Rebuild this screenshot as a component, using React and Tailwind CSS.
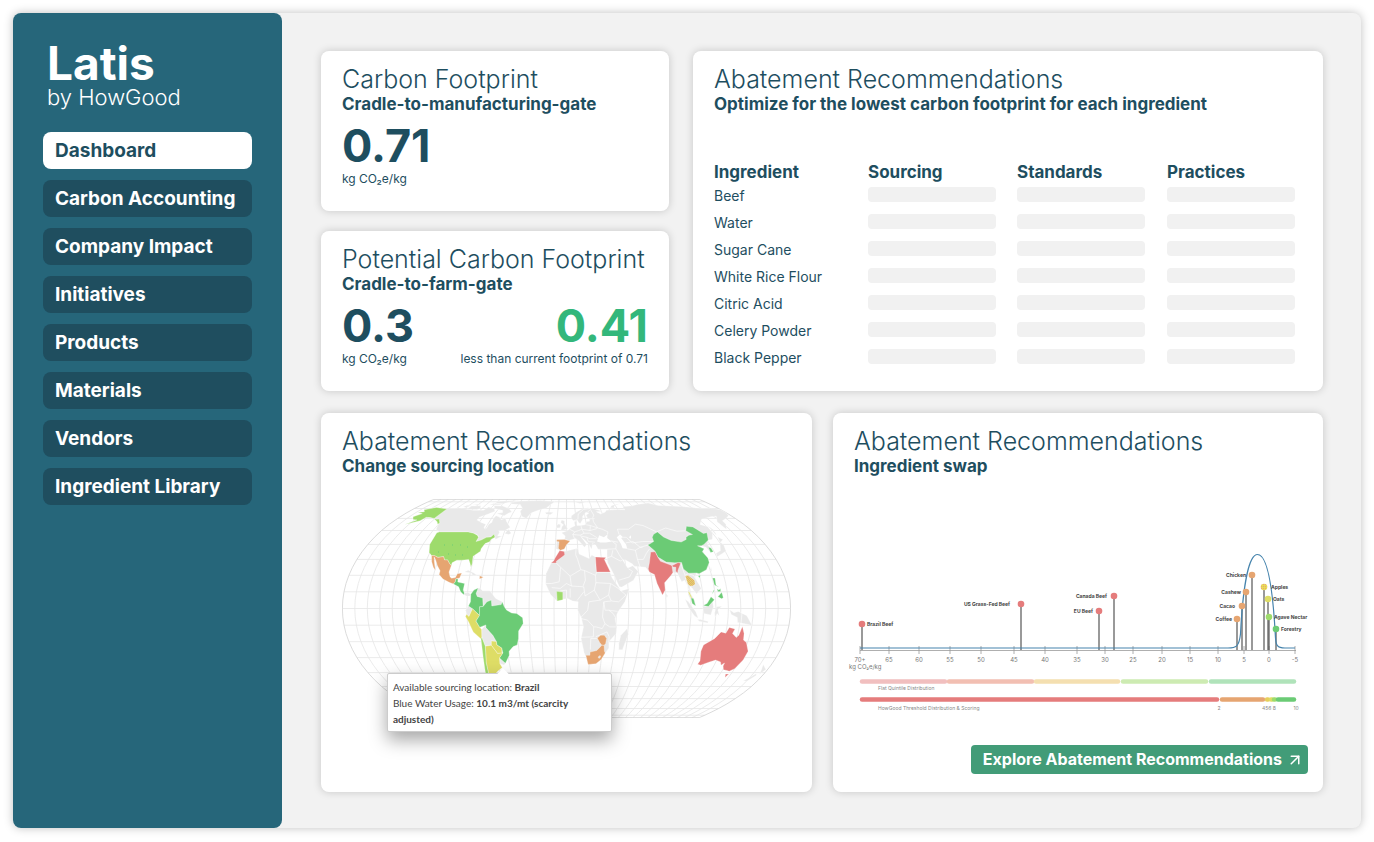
import { ArrowUpRight } from "lucide-react";

const NAV = [
  "Dashboard",
  "Carbon Accounting",
  "Company Impact",
  "Initiatives",
  "Products",
  "Materials",
  "Vendors",
  "Ingredient Library",
];

const INGREDIENTS = [
  "Beef",
  "Water",
  "Sugar Cane",
  "White Rice Flour",
  "Citric Acid",
  "Celery Powder",
  "Black Pepper",
];

const RED = "#e57c7c";
const ORANGE = "#e6a571";
const YELLOW = "#dedd66";
const LIME = "#9edb6c";
const GREEN = "#6bcb75";
const LAND = "#e9e9e9";

// Rough outlines, "lon,lat lon,lat ..."
const LANDMASSES = [
  // Canada and its islands
  "-141,60 -141,69.6 -128,70.5 -115,69 -108,68 -96,68 -94,72 -85,69.5 -82,67 -87,64 -94,61 -94,58.5 -88,56.5 -82,55 -82,52.5 -80,51 -79,52 -79,55 -77,56.5 -78,60 -77,62.5 -72,61 -69,58.8 -65,60 -62,57 -56,52.5 -60,50 -66,50 -64.5,48.5 -65,46 -61,46 -66,43.5 -67,45 -69,47.3 -71,45.3 -75,45 -79,43 -83,42 -82.5,45.5 -85,47 -89,48 -95,49 -123,49 -128,51 -130,54.5 -130,56 -135,59 -137.5,59",
  "-62,66 -68,70 -78,73 -89,73.5 -85,70 -74,68 -72,65.5 -78,64.5 -68,62.5 -65,65",
  "-117,70 -116,73 -105,73.5 -102,70 -105,69 -115,69",
  "-125,72 -123,74.3 -117,74 -121,71.5",
  "-90,77 -90,81 -70,83 -62,82.3 -75,79 -80,76.5",
  "-96,75 -92,76.7 -80,75.5 -82,74.7",
  "-117,75 -112,76 -106,75",
  "-59,47.7 -57,51 -53,48 -55,47",
  // Greenland, Iceland, Svalbard
  "-73,78.3 -60,82 -35,83.5 -15,81 -20,75 -24,70.5 -33,68 -40,65 -43,60 -49,62 -53,67 -52,70 -58,75.5 -68,76",
  "-24,65.5 -20,66 -14.5,65.5 -18,63.4 -22.5,64",
  "11,79 20,80.3 26,79.5 17,76.7",
  // Caribbean and Panama
  "-85,22 -82,23.1 -77,21.5 -74.2,20.2 -77.5,19.9 -79,21.5",
  "-83,8.2 -82.6,9.3 -79.5,9.5 -77.3,8.5 -78,7.4 -80.5,7.4",
  // Venezuela and the Guianas, Ecuador, Bolivia, Uruguay
  "-71.7,12.3 -70,12 -68,10.6 -62,10.6 -57,6 -51.7,4 -52.5,2.3 -60,1.5 -60.5,5 -64,4 -67,1.2 -67.5,6.2 -72,7.2 -73,9",
  "-78.8,1.5 -75.5,-0.2 -78.5,-4.8 -80.3,-3.4 -81,-1",
  "-69,-12.5 -65.3,-9.8 -65.3,-11.5 -60.2,-16.3 -58,-19.8 -62,-19.5 -62.6,-22.2 -67.8,-22.8 -69.5,-17.3",
  "-57.6,-30.2 -53.4,-33.7 -54.9,-34.9 -58.3,-34",
  // Africa
  "-17,14.7 -17,21 -13,27.7 -9.8,29.8 -6,35.8 -2,35.1 10,37.3 11,33.5 19.5,30.5 22,32.8 25,31.6 34,31.2 32.5,30 35.5,24 37.5,18.5 43,12 44,10.5 51,12 47,4 41.5,-1.7 39,-6 40.7,-11 40.5,-15 35,-20 35.5,-24 32.8,-27 30,-31.3 25.7,-34 19,-34.5 18,-31.5 15,-27 12,-18 13.8,-11 12,-5.5 9,-1 9.5,4 5,4.4 1,6 -4,5.3 -7.7,4.4 -13,8.5",
  "49.3,-12 50.5,-15.5 47,-25 44,-25 43.5,-21 44.5,-16",
  // Europe and Asia
  "-9.3,37 -9,43.3 -1.8,43.4 -1.2,46 -4.7,48.4 1.5,50 4,52 8.5,53.8 8,57 10.5,57.7 10.5,54 14,54 19,54.5 21,57.3 24,57.5 24,59.3 30,60 22.5,60 21.5,63 25.3,65 22,65.8 17.5,62 17,58.8 14,55.5 12.8,56 11,59 7.5,58 5,60 5.5,62.5 12,66.5 17,69 25,71 31,70.2 41,67 34,66.5 38,64 44,66 46,68 54,68.5 60,69 68,68.5 68,72.5 74,72.8 81,73.5 88,75.5 104,77.5 113,74 127,73 140,72.5 160,70 170,69.9 179.9,69 179.9,65 177,62.5 170,60 163,58 162,55 157,51 156,57 163,62 156,61.5 143,59.3 135.5,54.8 141,53 140,48 135,43.3 131,43 127.5,40 129.3,36.5 126.5,34.5 125,38 121.5,39 118,39 122.5,37 119.5,35 122,31 121.5,28 117,23.5 110,21 108,21.5 106,19 109.3,12 105,8.7 102,12.3 100,13.5 99.5,10 103,5 104,1.4 101,3 98.3,8 98.5,13.5 97,17 94.3,16 92,21.5 88,21.7 80,15.5 80,11 77.5,8 74,15 72.8,20.5 69,22 66.5,25 57,25.7 56,27 50,30 48,30 50,26.5 51.5,24.5 56,26 59.8,22.4 55,17 45,12.8 43,13 39,21 35,28 35,31 36,36.7 28,36.7 26.5,39.5 23.5,40.5 22.5,36.7 19.5,41 13.5,45.5 18.3,40 16,38 12,42 8.5,44.2 3.3,43 0,39.7 -2,36.8 -5.5,36",
  "-5.5,50 1.4,51.3 0,53 -2,55.8 -2,57.6 -5,58.6 -6,56.5 -3,54.5 -4.5,53",
  "-10,52 -6.3,52.2 -6,54.5 -8,55.2 -10,54",
  "52,71 56,74 68,76.9 58,73 57,70.7",
  "130,31.5 131,34 136,35.7 140,41 145,43.5 142,45.3 140.5,42 142,39.5 140.8,35.5 135.5,33.6",
  "142,46.5 142,54 143.5,51 143,48",
  "121,22 120.2,23.5 121.7,25.2",
  "80,9.5 81.8,7.5 80.5,6",
  // Indonesia, New Guinea, New Zealand
  "95.5,5.5 98,4 104,-2 106,-5.8 103,-4.5 98.5,0",
  "105.5,-6.5 108,-6.5 114.3,-7.8 114,-8.6 107,-7.6",
  "109.3,1.5 114,1.2 117.5,4 118,1 116,-3.8 110.5,-3",
  "119.5,-5.3 119,-2.5 120.5,1 124.8,1.3 121.5,-0.8 123,-4.5 121,-3",
  "131,-0.7 134.5,-2.5 138,-1.7 145,-4.3 150.5,-10.5 147,-9.5 143,-9 138,-8.3 137.5,-5.3 132.5,-3.5",
  "172.8,-34.6 178.3,-37.8 176,-41.2 174.8,-38.5",
  "172.7,-40.6 174,-42 170.5,-46 166.8,-46",
];

const SEAS = [
  "28,42 31,46.5 35,45 39,47 38,44.5 41.5,42 36,41.3 31,41.3",
  "47,45 51,47 53,45 51,44.5 54,40 54,37 50,37.3 49.5,40.3",
  "58.5,45 61,46.5 60,44",
];

const BORDERS = [
  // Africa
  "-8.7,27.7 -5,25 -6,16 -12,15 -17,15",
  "-5,25 3,19.5 12,23.5 9.5,30 8,33 8.5,37",
  "12,23.5 15,23 24,20 25,22 25,31",
  "24,20 24,15.5 22.5,11 15,7.5 14,13 4,13.5 3,19.5",
  "15,23 15.5,17 13.5,13.5",
  "4,13.5 0,15 -5,12 -12,12.5",
  "3,6.5 3,12",
  "0,6 0,11 -5,10.5",
  "8.5,4.8 14,10",
  "25,22 37,22",
  "24,15.5 36,15 34,8 27,5 22.5,11",
  "36,15 42,12 48,8 42,4 36,4.5 34,8",
  "36,4.5 30,4 31,-1 34,-1 41,-1.7",
  "34,-1 37.5,-3 39,-5",
  "27,5 18,4 17,-1 12,-5",
  "30,4 29,-5 31,-9 35,-11 40,-11",
  "12,-6 17,-7 22,-11 24,-11 29,-12 31,-9",
  "22,-11 22,-17 12,-17.3",
  "25,-18 20,-18 20,-25",
  "24,-17 30,-15 33,-14 35,-17 35,-20",
  // Europe
  "-1.8,43.4 3,42.5",
  "7.5,44 6,47 8,49 3,51",
  "6,47 13,46.5 17,48 15,51 14.5,54",
  "8,49 12,50 15,51 23,50 24,54 20,54.5",
  "17,48 22,48 28,45 29,44",
  "13,46 19,45 22,44 28,44",
  "19,45 20,42 26,41.5",
  "24,54 31,52 28,57 28,59.5",
  "31,52 35,51 40,49 39,47",
  "23,50 30,51.5",
  "12,59 13,64 20,69 28,70",
  "24,66 28,69 30,63 28,60.5",
  // Middle East and Asia
  "36,36.7 44,37 45,40 42,42",
  "41,42.5 47,41.5",
  "44,37 46,33 48,30",
  "35,31 39,32 41,36",
  "39,32 46,29 48,29.5",
  "43,17 52,19 55,22.5 52,24",
  "54,37 61,36 61,30 62,25",
  "61,30 66,30 70,34 74,37",
  "54,41 61,42 66,38 68,38",
  "50,47 50,51 61,51 70,55 77,54 87,49",
  "53,45 56,45 60,41 70,42 80,42",
  "61,36 66,38 73.5,39.5",
  "87,49 98,52 107,49.5 116,49.8",
  "97,28 98,20 101,21 105,20 108,15",
  "98,20 99,11",
  "141,-2.5 141,-9",
];

const SOURCING = [
  // United States and Alaska
  [LIME, "-124.7,48.4 -123,49 -95,49 -89,48 -84.5,46.5 -82.5,45 -83,42 -79,43 -75,45 -71,45.3 -69,47.3 -67,45 -70,43.5 -70.5,41.8 -74,40.5 -76,37 -75.8,35.3 -81,32 -80,27 -80.5,25.2 -82,27.5 -84,30 -89.5,29.5 -94,29.5 -97.3,27.8 -97.3,26 -99.5,27.5 -102,29.7 -104.5,29.6 -106.5,31.8 -111,31.3 -114.8,32.5 -117.2,32.5 -120.6,34.5 -124,40"],
  [LIME, "-141,60 -141,69.6 -156,71.3 -166,68.5 -162,66.5 -168,65.6 -161,64.5 -166,61.5 -162,59 -157.5,58.7 -164,54.7 -153,58 -151,61 -146,60.7"],
  [LIME, "-141,60 -137.5,59.3 -135,59.5 -130,56 -131,55 -134,57 -138,58.7"],
  // Mexico, Central America, Dominican Republic
  [ORANGE, "-117.2,32.5 -114.8,32.5 -111,31.3 -106.5,31.8 -104.5,29.6 -102,29.7 -99.5,27.5 -97.3,26 -97.8,22 -96,19 -94.5,18.2 -91.5,18.6 -90.5,21 -87,21.5 -88,18.3 -91,17.8 -91,16 -92.2,14.6 -96,15.7 -101.5,17.7 -105.5,20.5 -105.5,22.8 -109,26 -112.5,30 -114.7,31.7 -113,29 -110,24 -109.5,23 -112,25 -115,28.5"],
  [GREEN, "-92.2,14.6 -91,16 -91,17.8 -89.2,17.8 -88.9,15.9 -83.2,15 -83.7,11 -82.6,9.3 -83,8.2 -85.7,10 -87.7,13"],
  [ORANGE, "-71.7,19.7 -68.5,18.8 -71.5,17.8"],
  // South America
  [GREEN, "-77.3,8.5 -75,11 -71.7,12.3 -73,9 -72,7.2 -67.5,6.2 -67,1.2 -69.8,1 -70,-4.2 -72.5,-2.4 -75.5,-0.2 -78.8,1.5 -77.2,4"],
  [YELLOW, "-80.3,-3.4 -78.5,-4.8 -75.5,-0.2 -72.5,-2.4 -70,-4.2 -73,-7.5 -70.5,-11 -69,-12.5 -69.5,-17.3 -70.4,-18.3 -76,-14 -79,-8 -81.3,-4.7"],
  [GREEN, "-70,-4.2 -69.8,1 -67,1.2 -64,4 -60.5,5 -60,1.5 -52.5,2.3 -51.7,4 -50,1 -48,-1 -44,-2.7 -40,-3 -35.3,-5.5 -35,-9 -39,-13.5 -39.5,-18 -41,-22 -44.5,-23 -48.5,-26 -48.8,-28.5 -50.3,-30.3 -53.4,-33.7 -57.6,-30.2 -54,-27 -54.3,-24 -58,-22 -58,-19.8 -60.2,-16.3 -65.3,-11.5 -65.3,-9.8 -69.5,-11 -70.5,-11 -73,-7.5"],
  [YELLOW, "-62.6,-22.2 -62,-19.5 -58,-19.8 -58,-22 -54.3,-24 -54.7,-27.3 -58.6,-27.3"],
  [YELLOW, "-67.8,-22.8 -62.6,-22.2 -58.6,-27.3 -54,-27 -57.6,-30.2 -58.3,-34 -57,-36.5 -62,-39 -65,-41 -67.5,-46 -69,-50 -68.4,-52.3 -72,-51 -71.5,-44 -70,-33 -68.5,-27"],
  [LIME, "-70.4,-18.3 -69.5,-17.3 -67.8,-22.8 -68.5,-27 -70,-33 -71.5,-44 -72,-51 -68.4,-52.3 -68,-55 -75,-50 -73.5,-40 -71.5,-30"],
  // Africa and Spain
  [RED, "-13,27.7 -8.7,27.7 -8.7,28.8 -3,32 -1.5,33 -2,35.1 -6,35.8 -9.8,31 -11,29"],
  [RED, "25,31.6 34,31.2 32.5,30 35.5,24 36.5,22 25,22"],
  [LIME, "-8,10.3 -3,9.8 -3,5.2 -7.5,4.4"],
  [ORANGE, "25.3,-17.8 28,-16 31,-16 33,-18 32.5,-21 31.3,-22.3 29.5,-22.2 27.5,-20.5"],
  [ORANGE, "16.5,-28.5 20,-28.5 20,-26.5 25.5,-25.5 29.5,-22.2 31.3,-22.3 32,-26 32.8,-27 30,-31.3 25.7,-34 19,-34.5"],
  [LAND, "27,-29.7 28.7,-28.6 29.3,-29.6 28,-30.6"],
  [ORANGE, "-9.2,43.2 -1.8,43.4 3.3,42.3 0,39.7 -2,36.8 -5.5,36 -7.3,37.3 -6.8,41.8 -9,42"],
  // Asia
  [GREEN, "73.5,39.5 80,42 80.3,45 83,47.2 87.8,49 91,45.2 96.5,42.8 105,41.6 111,43.5 112,45 116,46.5 119.8,47 116,49.8 120,53.3 126,52.8 131,47.8 135,48.4 131,43 124.5,40 121.5,39 118,39 122.5,37 119.5,35 122,31 121.5,28 117,23.5 110,21 108,21.5 101.5,21.3 98,24 98,28 92,27.8 85,28.3 79,31.5 78,35.5"],
  [GREEN, "108.7,19.5 110.8,20 109.5,18.3"],
  [GREEN, "126.5,34.5 129.3,35 129,37.5 127,38"],
  [RED, "74,34.8 78,35 79,31.2 80.3,28.8 88,26.4 89,26 88.5,21.7 86.5,20 80.2,15.5 80,11 77.5,8 74,15 72.8,20.5 69,22 68.5,24 70.5,27.8"],
  [RED, "89,26 95,28 97,27.5 93,23 92.5,21.5 91,22.5 92,25 89.7,25.2"],
  ["url(#weave)", "98,19.5 100.5,20 105,17 105,14.5 102.5,13.5 100.5,13.5 99,14.5"],
  [YELLOW, "98.3,10 99.3,10 101.5,6 100.5,6"],
  [GREEN, "100.3,6.2 102.3,6 103.8,1.5 101,3"],
  [GREEN, "109.7,1.7 113,3 116.5,7 119,5.2 117.5,4 114,1.2"],
  [GREEN, "120.3,18.3 122.2,18.3 121.8,14 124,12.7 120.5,14"],
  [GREEN, "122,7 125.5,9.7 126.3,6.5 125,5.8"],
  [GREEN, "122,11.8 123.5,11 125,12 124.8,10.2 122.5,10"],
  [GREEN, "117.3,8.4 119.4,11.2 119.7,10.6"],
  // Australia and Tasmania
  [RED, "114,-22 113.5,-26 115.7,-32 115,-34.3 118,-35 124,-33 129,-31.6 134,-32.8 136,-35 138,-33.5 138.3,-35.6 140.5,-38 144,-38.5 146.5,-39 150,-37.3 152.8,-31.5 153.3,-26 149,-20.5 146,-19 145,-15 142.5,-10.8 141,-16 139.5,-17.5 135.5,-15 136.8,-12.2 132,-11.3 130,-14.8 126,-14 122,-18"],
  [RED, "145,-41 148,-41 147,-43.5"],
];

// Equal Earth projection on a 449 x 219 canvas
const RADIUS = 82.8;
const A = [1.340264, -0.081106, 0.000893, 0.003796];

function project(lon, lat) {
  const rad = Math.PI / 180;
  const t = Math.asin((Math.sqrt(3) / 2) * Math.sin(lat * rad));
  const t2 = t * t;
  const t6 = t2 * t2 * t2;
  const dy = A[0] + 3 * A[1] * t2 + t6 * (7 * A[2] + 9 * A[3] * t2);
  const x = (2 * Math.sqrt(3) * lon * rad * Math.cos(t)) / (3 * dy);
  const y = t * (A[0] + A[1] * t2 + t6 * (A[2] + A[3] * t2));
  return [224.5 + RADIUS * x, 109.5 - RADIUS * y];
}

function points(outline) {
  return outline
    .split(" ")
    .map((pair) => {
      const [lon, lat] = pair.split(",").map(Number);
      const [x, y] = project(lon, lat);
      return `${x.toFixed(1)},${y.toFixed(1)}`;
    })
    .join(" ");
}

function meridian(lon) {
  const line = [];
  for (let lat = -90; lat <= 90; lat += 5) line.push(`${lon},${lat}`);
  return points(line.join(" "));
}

const MERIDIANS = Array.from({ length: 35 }, (_, i) => meridian(-170 + i * 10));
const PARALLELS = Array.from({ length: 17 }, (_, i) => -80 + i * 10);

function WorldMap() {
  return (
    <svg viewBox="0 0 449 219" className="block w-full" role="img" aria-label="Sourcing locations">
      <defs>
        <pattern id="weave" width="2" height="2" patternUnits="userSpaceOnUse">
          <rect width="2" height="2" fill={YELLOW} />
          <rect width="1" height="1" fill={ORANGE} />
          <rect x="1" y="1" width="1" height="1" fill={ORANGE} />
        </pattern>
      </defs>
      <g fill="none" stroke="#e6e6e6" strokeWidth="0.8">
        {MERIDIANS.map((line) => (
          <polyline key={line} points={line} />
        ))}
        {PARALLELS.map((lat) => (
          <polyline key={lat} points={points(`-180,${lat} 180,${lat}`)} />
        ))}
      </g>
      <g fill="none" stroke="#d2d2d2" strokeWidth="0.8">
        <polyline points={meridian(-180)} />
        <polyline points={meridian(180)} />
        <polyline points={points("-180,90 180,90")} />
        <polyline points={points("-180,-90 180,-90")} />
      </g>
      <g fill={LAND} stroke="#fff" strokeWidth="0.3">
        {LANDMASSES.map((outline) => (
          <polygon key={outline} points={points(outline)} />
        ))}
      </g>
      <g fill="#fff">
        {SEAS.map((outline) => (
          <polygon key={outline} points={points(outline)} />
        ))}
      </g>
      <g fill="none" stroke="#fff" strokeWidth="0.6">
        {BORDERS.map((line) => (
          <polyline key={line} points={points(line)} />
        ))}
      </g>
      <g stroke="#fff" strokeWidth="0.3">
        {SOURCING.map(([fill, outline]) => (
          <polygon key={outline} points={points(outline)} fill={fill} />
        ))}
      </g>
      <path
        d="M102 46h1M110 46h1M118 46h1M125 48h1M96 53h1M106 55h1M113 56h1M120 56h1"
        stroke={GREEN}
        strokeWidth="1"
      />
    </svg>
  );
}

const TICKS = [
  [13, "70+"], [42, "65"], [72, "60"], [103, "55"], [134, "50"], [167, "45"],
  [198, "40"], [230, "35"], [258, "30"], [286, "25"], [315, "20"], [343, "15"],
  [371, "10"], [397, "5"], [422, "0"], [448, "-5"],
];

// x, y, colour, label, label x, label anchor
const PINS = [
  [15, 74, RED, "Brazil Beef", 20, "start"],
  [174, 54, RED, "US Grass-Fed Beef", 163, "end"],
  [252, 61, RED, "EU Beef", 246, "end"],
  [267, 46, RED, "Canada Beef", 260, "end"],
  [405, 25, ORANGE, "Chicken", 399, "end"],
  [399, 42, ORANGE, "Cashew", 394, "end"],
  [395, 56, ORANGE, "Cacao", 388, "end"],
  [390, 69, ORANGE, "Coffee", 385, "end"],
  [417, 37, "url(#dots)", "Apples", 424, "start"],
  [421, 49, YELLOW, "Oats", 426, "start"],
  [422, 67, LIME, "Agave Nectar", 427, "start"],
  [429, 79, GREEN, "Forestry", 434, "start"],
];

const QUINTILES = [
  [15, 98, "#f1bfbf"],
  [102, 185, "#f2bfb2"],
  [189, 271, "#f4dfb0"],
  [276, 359, "#cdebb2"],
  [364, 447, "#b0e3ba"],
];

const THRESHOLDS = [
  [15, 370, RED],
  [375, 416, ORANGE],
  [420, 421, "#e6cf5c"],
  [424, 425, YELLOW],
  [427, 428, LIME],
  [431, 447, GREEN],
];

function SwapChart() {
  return (
    <svg viewBox="0 0 462 165" className="block w-full font-['Inter',sans-serif]" role="img" aria-label="Ingredient swap distribution">
      <defs>
        <pattern id="dots" width="2" height="2" patternUnits="userSpaceOnUse">
          <rect width="2" height="2" fill="#e8dc55" />
          <rect width="1" height="1" fill={ORANGE} />
        </pattern>
      </defs>

      <path d="M13 100.5H449" stroke="#9a9a9a" strokeWidth="0.8" />
      {TICKS.map(([x, label]) => (
        <g key={label}>
          <path d={`M${x} 96V104`} stroke="#9a9a9a" strokeWidth="0.8" />
          <text x={x} y="112" textAnchor="middle" fontSize="6" fill="#777">{label}</text>
        </g>
      ))}
      <text x="2" y="119" fontSize="6" fill="#777">kg CO₂e/kg</text>

      {PINS.map(([x, y, , label]) => (
        <path key={label} d={`M${x} ${y}V100`} stroke="#555" strokeWidth="1.2" />
      ))}
      <path
        d="M13 98H381C389 98 392 97 393.5 84C396 35 402 4.5 410.5 4.5C421 4.5 426 40 428.5 88C429 95 430 98 438 98H448"
        fill="none"
        stroke="#4684ad"
        strokeWidth="1.2"
      />
      {PINS.map(([x, y, fill, label, labelX, anchor]) => (
        <g key={label}>
          <circle cx={x} cy={y} r="3.3" fill={fill} />
          <text x={labelX} y={y + 2} textAnchor={anchor} fontSize="5" fontWeight="700" fill="#444">{label}</text>
        </g>
      ))}

      <g strokeWidth="4.5" strokeLinecap="round">
        {QUINTILES.map(([from, to, stroke]) => (
          <path key={from} d={`M${from} 131.5H${to}`} stroke={stroke} />
        ))}
        {THRESHOLDS.map(([from, to, stroke]) => (
          <path key={from} d={`M${from} 149.5H${to}`} stroke={stroke} />
        ))}
      </g>
      <g fontSize="5" fill="#888">
        <text x="31" y="140">Flat Quintile Distribution</text>
        <text x="31" y="160">HowGood Threshold Distribution &amp; Scoring</text>
        <text x="372" y="160" textAnchor="middle">2</text>
        <text x="415" y="160">456 8</text>
        <text x="449" y="160" textAnchor="middle">10</text>
      </g>
    </svg>
  );
}

function Card({ title, subtitle, className = "", children }) {
  return (
    <section className={`rounded-lg bg-white pt-[13px] shadow-[0_0_8px_rgba(0,0,0,0.18)] ${className}`}>
      <header className="px-[21px]">
        <h2 className="text-[25px] leading-[31px] font-light">{title}</h2>
        <p className="text-[17px] leading-[18px] font-bold">{subtitle}</p>
      </header>
      {children}
    </section>
  );
}

function Unit() {
  return <p className="text-xs leading-4">kg CO₂e/kg</p>;
}

export default function App() {
  return (
    <div className="flex min-h-screen bg-white p-[13px] pb-[14px] font-['Inter',sans-serif] text-[#1e4e5f]">
      <div className="flex flex-1 rounded-lg bg-[#f2f2f2] shadow-[0_0_10px_rgba(0,0,0,0.25)]">
        <aside className="w-[269px] shrink-0 rounded-lg bg-[#26667a] px-[30px] pt-[26px] text-white">
          <div className="px-1">
            <h1 className="text-[46px] leading-[48px] font-bold">Latis</h1>
            <p className="text-[22px] leading-5 font-light">by HowGood</p>
          </div>
          <nav className="mt-[25px] flex flex-col gap-[11px]">
            {NAV.map((item) => (
              <a
                key={item}
                href="#"
                aria-current={item === "Dashboard" ? "page" : undefined}
                className={`rounded-lg px-3 text-[19px] leading-[37px] font-bold whitespace-nowrap ${
                  item === "Dashboard" ? "bg-white text-[#1e4e5f]" : "bg-[#1f4e5f] text-white"
                }`}
              >
                {item}
              </a>
            ))}
          </nav>
        </aside>

        <main className="flex min-w-0 flex-1 flex-col gap-[22px] pt-[38px] pr-[38px] pb-9 pl-[39px]">
          <div className="grid grid-cols-[348fr_630fr] gap-6">
            <div className="grid grid-rows-2 gap-5">
              <Card title="Carbon Footprint" subtitle="Cradle-to-manufacturing-gate" className="pb-6">
                <div className="px-[21px] pt-2">
                  <p className="text-[45px] leading-[50px] font-bold">0.71</p>
                  <Unit />
                </div>
              </Card>
              <Card title="Potential Carbon Footprint" subtitle="Cradle-to-farm-gate" className="pb-6">
                <div className="flex justify-between px-[21px] pt-2">
                  <div>
                    <p className="text-[45px] leading-[50px] font-bold">0.3</p>
                    <Unit />
                  </div>
                  <div className="text-right">
                    <p className="text-[45px] leading-[50px] font-bold text-[#33b77b]">0.41</p>
                    <p className="text-xs leading-4">less than current footprint of 0.71</p>
                  </div>
                </div>
              </Card>
            </div>

            <Card
              title="Abatement Recommendations"
              subtitle="Optimize for the lowest carbon footprint for each ingredient"
            >
              <div className="pt-[50px] pr-7 pl-[21px]">
                <table className="w-full table-fixed text-left">
                  <thead>
                    <tr className="text-[17px] leading-[18px]">
                      <th className="w-[154px] p-0 font-bold">Ingredient</th>
                      <th className="w-[149px] p-0 font-bold">Sourcing</th>
                      <th className="w-[150px] p-0 font-bold">Standards</th>
                      <th className="p-0 font-bold">Practices</th>
                    </tr>
                  </thead>
                  <tbody>
                    {INGREDIENTS.map((name) => (
                      <tr key={name} className="h-[27px]">
                        <td className="p-0 pt-[3px] text-sm leading-5">{name}</td>
                        <td className="p-0"><div className="h-[15px] w-32 rounded-sm bg-[#f1f1f1]" /></td>
                        <td className="p-0"><div className="h-[15px] w-32 rounded-sm bg-[#f1f1f1]" /></td>
                        <td className="p-0"><div className="h-[15px] w-32 rounded-sm bg-[#f1f1f1]" /></td>
                      </tr>
                    ))}
                  </tbody>
                </table>
              </div>
            </Card>
          </div>

          <div className="grid flex-1 grid-cols-[491fr_490fr] gap-[21px]">
            <Card title="Abatement Recommendations" subtitle="Change sourcing location">
              <div className="relative mx-[21px] mt-6">
                <WorldMap />
                <div className="absolute top-[174px] left-[10%] w-[225px] rounded-xs border border-[#ccc] bg-white pt-[5px] pr-8 pb-1 pl-[5px] font-['Lato',sans-serif] text-[10px] leading-4 text-[#444] shadow-[0_8px_18px_rgba(0,0,0,0.35)]">
                  <span className="absolute -top-1 left-1/2 size-2 rotate-45 bg-white" />
                  <p>Available sourcing location: <b>Brazil</b></p>
                  <p>Blue Water Usage: <b>10.1 m3/mt (scarcity adjusted)</b></p>
                </div>
              </div>
            </Card>

            <Card title="Abatement Recommendations" subtitle="Ingredient swap" className="flex flex-col">
              <div className="px-3.5 pt-[75px]">
                <SwapChart />
              </div>
              <div className="mt-auto flex justify-end px-[15px] pb-[18px]">
                <button
                  type="button"
                  className="flex items-center gap-1 rounded-sm bg-[#429c78] pr-1 pl-3 text-base leading-[29px] font-bold whitespace-nowrap text-white"
                >
                  Explore Abatement Recommendations
                  <ArrowUpRight size={18} strokeWidth={2} />
                </button>
              </div>
            </Card>
          </div>
        </main>
      </div>
    </div>
  );
}
